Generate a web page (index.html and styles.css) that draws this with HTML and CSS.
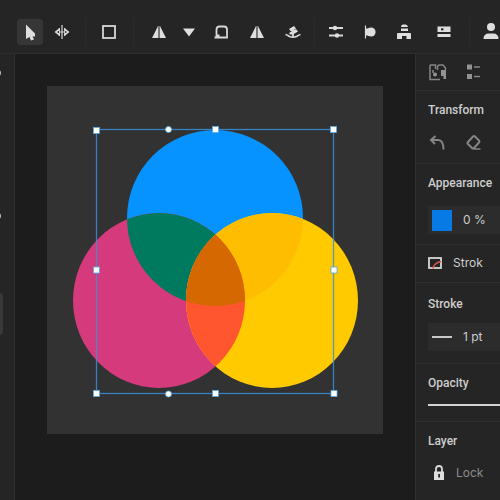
FILE: index.html
```html
<!DOCTYPE html>
<html lang="en">
<head>
    <meta charset="UTF-8">
    <title>Vector Editor</title>
    <link rel="stylesheet" href="styles.css">
</head>
<body>
    <header class="toolbar">
        <button type="button" class="tool active" aria-label="Select">
            <svg width="26" height="26" viewBox="0 0 26 26"><path class="fill" d="M9 5.500 L18 14.500 V17.500 H15.500 L17 20.500 L14 21.500 L12.500 18 L9 20 Z"/></svg>
        </button>
        <button type="button" class="tool" aria-label="Width">
            <svg width="16" height="16" viewBox="0 0 16 16"><path class="line" d="M8 1 V15 M5.500 4 Q4.500 8 5.500 12 M10.500 4 Q11.500 8 10.500 12 M4 8 H12"/><path class="fill" d="M.5 8 L5.500 4 V12 Z M15.500 8 L10.500 4 V12 Z"/><path class="hole" d="M3 8 L5 6.800 V9.200 Z M13 8 L11 6.800 V9.200 Z"/></svg>
        </button>
        <span class="sep"></span>
        <button type="button" class="tool" aria-label="Rectangle">
            <svg width="16" height="16" viewBox="0 0 16 16"><rect class="line bold" x="2" y="2" width="12" height="12"/></svg>
        </button>
        <span class="sep wide"></span>
        <button type="button" class="tool" aria-label="Flip horizontal">
            <svg width="16" height="16" viewBox="0 0 16 16"><path class="fill" d="M7 2 V14 H1 Z M9 2 L15 14 H9 Z"/><path class="dim" d="M7 2 H9 V14 H7 Z"/></svg>
        </button>
        <button type="button" class="tool small" aria-label="More transforms">
            <svg width="14" height="16" viewBox="0 0 14 16"><path class="fill" d="M1 4.500 H13 L7 12.500 Z"/></svg>
        </button>
        <button type="button" class="tool large" aria-label="Shape">
            <svg width="16" height="16" viewBox="0 0 16 16"><path class="line bold" d="M3.500 12.500 V5.500 Q3.500 2.500 6.500 2.500 H11 Q14 2.500 14 5.500 V13.500 H1.500 M3.500 11.500 H6.500"/></svg>
        </button>
        <button type="button" class="tool large" aria-label="Reflect">
            <svg width="16" height="16" viewBox="0 0 16 16"><path class="fill" d="M7 2 V14 H1 Z M9 2 L15 14 H9 Z"/><path class="dim" d="M7 2 H9 V14 H7 Z"/></svg>
        </button>
        <button type="button" class="tool large" aria-label="Puppet warp">
            <svg width="18" height="16" viewBox="0 0 18 16"><path class="fill" d="M5 5 L10 2 L12 4.500 L7 7.500 Z M5 9 L12 5 L14 7.500 L9 10.500 L6 10.500 Z"/><path class="line bold" d="M9 5 V13 M1.500 10.500 Q3.500 11 5 12.200 Q9 14.200 13 12.200 Q14.500 11 16.500 10.500"/></svg>
        </button>
        <span class="sep tight"></span>
        <button type="button" class="tool large" aria-label="Adjustments">
            <svg width="16" height="16" viewBox="0 0 16 16"><path class="line bold" d="M1 4 H15 M1 11.500 H15"/><circle class="fill" cx="7" cy="4" r="2.200"/><circle class="fill" cx="9" cy="11.500" r="2.200"/></svg>
        </button>
        <button type="button" class="tool" aria-label="Align">
            <svg width="14" height="16" viewBox="0 0 14 16"><path class="line" d="M2.500 1.500 V14.500"/><circle class="fill" cx="8" cy="8" r="4.600"/><path class="fill" d="M2.500 4.500 H7 V11.500 H2.500 Z"/></svg>
        </button>
        <button type="button" class="tool large" aria-label="Arrange">
            <svg width="16" height="18" viewBox="0 0 16 18"><path class="fill" d="M5 4 Q5 1.500 7 1.500 H9.500 Q11.500 1.500 12 4 Z M5 5.500 H12 V8 H5 Z M1 11 Q1 10 2 10 H14 Q15 10 15 11 V16 H10.500 V13 H6 V16 H1 Z"/></svg>
        </button>
        <button type="button" class="tool xlarge" aria-label="Properties">
            <svg width="14" height="16" viewBox="0 0 14 16"><path class="fill" d="M.5 2.500 H13.500 V8 H.5 Z M.5 10 H13.500 V13 H.5 Z"/><path class="hole" d="M4 4.300 H6.500 V6.300 H4 Z"/></svg>
        </button>
        <span class="sep tight"></span>
        <button type="button" class="tool large" aria-label="Account">
            <svg width="18" height="20" viewBox="0 0 18 20"><circle class="fill" cx="9" cy="5" r="4"/><path class="fill" d="M1.500 17 Q1.500 11.500 7 11.500 H11 Q16.500 11.500 16.500 17 Z"/></svg>
        </button>
    </header>

    <main class="workspace">
        <nav class="rail">
            <button type="button" class="rail-dot" aria-label="Pen"></button>
            <button type="button" class="rail-dot" aria-label="Curve"></button>
            <button type="button" class="rail-tab" aria-label="Layers"></button>
        </nav>

        <section class="canvas">
            <svg class="artboard" viewBox="47 86 336 348">
                <defs>
                    <clipPath id="in-blue"><circle cx="215" cy="218" r="88"/></clipPath>
                    <clipPath id="in-pink"><ellipse cx="159" cy="300.500" rx="86" ry="87.500"/></clipPath>
                </defs>
                <circle cx="215" cy="218" r="88" fill="#0793ff"/>
                <ellipse cx="159" cy="300.500" rx="86" ry="87.500" fill="#d43a7c"/>
                <ellipse cx="159" cy="300.500" rx="86" ry="87.500" fill="#007a5e" clip-path="url(#in-blue)"/>
                <ellipse cx="272" cy="300.500" rx="86" ry="87.500" fill="#ffca00"/>
                <ellipse cx="272" cy="300.500" rx="86" ry="87.500" fill="#ffbd00" clip-path="url(#in-blue)"/>
                <g clip-path="url(#in-pink)">
                    <ellipse cx="272" cy="300.500" rx="86" ry="87.500" fill="#ff562f"/>
                    <ellipse cx="272" cy="300.500" rx="86" ry="87.500" fill="#d56800" clip-path="url(#in-blue)"/>
                </g>
                <!-- selection box -->
                <rect class="selection" x="96.500" y="129.500" width="237" height="264"/>
                <g class="handles">
                    <rect x="93.500" y="127.500" width="6" height="6"/>
                    <rect x="212.500" y="126.500" width="6" height="6"/>
                    <rect x="330.500" y="126.500" width="6" height="6"/>
                    <rect x="93.500" y="267" width="6" height="6"/>
                    <rect x="331" y="267" width="6" height="6"/>
                    <rect x="93.500" y="390.500" width="6" height="6"/>
                    <rect x="212.500" y="390.500" width="6" height="6"/>
                    <rect x="331" y="390.500" width="6" height="6"/>
                    <circle cx="168.500" cy="129.500" r="3"/>
                    <circle cx="168.500" cy="394" r="3"/>
                </g>
            </svg>
        </section>

        <aside class="panel">
            <div class="tabs">
                <button type="button" class="icon-button" aria-label="Library">
                    <svg width="20" height="20" viewBox="0 0 20 20"><path class="soft" d="M2 3 V17.500 H12 M2 3 H7.500 V7 M9.500 8 V5 Q9.500 3 12 3 H15 L17.500 6 V8 M5 11 V8"/><circle class="softfill" cx="7" cy="12.500" r="2"/><path class="softfill" d="M13 8 H18 V17 H15.500 V14 H13 Z"/></svg>
                </button>
                <button type="button" class="icon-button" aria-label="List view">
                    <svg width="18" height="20" viewBox="0 0 18 20"><path class="softfill" d="M3 2.500 H8 V7.500 H3 Z M3 12 H8 V17 H3 Z"/><path class="soft" d="M10 5 H16 M10 14.500 H16"/></svg>
                </button>
            </div>

            <section class="group transform">
                <h2>Transform</h2>
                <div class="actions">
                    <button type="button" class="icon-button" aria-label="Undo">
                        <svg width="20" height="20" viewBox="0 0 20 20"><path class="soft thick" d="M7.500 3 L3 7 L7 11 M3 7 H10 Q15.500 7 15.500 16.500"/></svg>
                    </button>
                    <button type="button" class="icon-button" aria-label="Erase">
                        <svg width="18" height="20" viewBox="0 0 18 20"><path class="soft thick" d="M9 3.500 Q10 2.500 11 3.500 L15 7.500 Q16 8.500 15 9.500 L10 15 Q9 16 8 15 L4 11 Q3 10 4 9 Z"/><path class="soft" d="M10 16 H16.500"/></svg>
                    </button>
                </div>
            </section>

            <section class="group appearance">
                <h2>Appearance</h2>
                <div class="field">
                    <button type="button" class="swatch" aria-label="Fill color"></button>
                    <input type="text" value="0 %" aria-label="Fill amount">
                </div>
            </section>

            <section class="row">
                <button type="button" class="row-button">
                    <svg width="16" height="16" viewBox="0 0 16 16"><rect class="line bold" x="2" y="3" width="12" height="10"/><path class="strike" d="M6 13.500 Q7 8 14 6.500"/></svg>
                    <span>Strok</span>
                </button>
            </section>

            <section class="group stroke">
                <h2>Stroke</h2>
                <div class="field">
                    <span class="weight"></span>
                    <input type="text" value="1 pt" aria-label="Stroke weight">
                </div>
            </section>

            <section class="group opacity">
                <h2><label for="opacity">Opacity</label></h2>
                <input type="range" id="opacity" class="slider" min="0" max="100" value="100">
            </section>

            <section class="group layer">
                <h2>Layer</h2>
                <button type="button" class="row-button lock">
                    <svg width="14" height="18" viewBox="0 0 14 18"><path class="line bold" d="M4 8 V5 Q4 2 7 2 Q10 2 10 5 V8"/><path class="fill" d="M2 7.500 H12 V16 H2 Z"/><path class="hole" d="M6.200 10 H8 V13.500 H6.200 Z"/></svg>
                    <span>Lock</span>
                </button>
            </section>
        </aside>
    </main>
</body>
</html>
```
FILE: styles.css
```css
* {
    box-sizing: border-box;
}
body {
    margin: 0;
    height: 100vh;
    overflow: hidden;
    display: flex;
    flex-direction: column;
    background: #1c1c1c;
    color: #cdcdcd;
    font-family: Inter, "Liberation Sans", sans-serif;
    font-size: 12px;
    line-height: 16px;
}
button {
    background: none;
    border: none;
    padding: 0;
    color: inherit;
    font: inherit;
    cursor: pointer;
}
svg {
    display: block;
    flex: none;
}

/* Toolbar */
.toolbar {
    display: flex;
    align-items: center;
    gap: 6px;
    flex: none;
    height: 54px;
    padding: 11px 0 0 17px;
    background: #252525;
    border-bottom: 1px solid #2e2e2e;
    overflow: hidden;
}
.tool {
    display: flex;
    align-items: center;
    justify-content: center;
    flex: none;
    width: 26px;
    height: 26px;
    border-radius: 3px;
}
.tool.active {
    background: #363636;
}
.tool.small {
    width: 22px;
}
.tool.large {
    width: 30px;
}
.tool.xlarge {
    width: 38px;
}
.sep {
    flex: none;
    width: 1px;
    height: 28px;
    margin: 0 4px;
    background: #2b2b2b;
}
.sep.wide {
    margin: 0 6px 0 5px;
}
.sep.tight {
    margin: 0;
}

/* Icon strokes and fills */
.line {
    fill: none;
    stroke: #d8d8d8;
    stroke-width: 1.2;
}
.line.bold {
    stroke-width: 1.8;
}
.fill {
    fill: #dedede;
}
.dim {
    fill: #777;
}
.hole {
    fill: #2a2a2a;
}
.soft {
    fill: none;
    stroke: #858585;
    stroke-width: 1.5;
}
.soft.thick {
    stroke-width: 2;
}
.softfill {
    fill: #939393;
}
.strike {
    fill: none;
    stroke: #d9534f;
    stroke-width: 1.6;
}

/* Workspace */
.workspace {
    display: flex;
    flex: 1;
    min-height: 0;
}
.rail {
    display: flex;
    flex-direction: column;
    align-items: flex-end;
    flex: none;
    width: 15px;
    padding: 16px 13px 0 0;
    background: #252525;
    border-right: 1px solid #303030;
}
.rail-dot {
    flex: none;
    width: 6px;
    height: 6px;
    margin-bottom: 137px;
    border-radius: 50%;
    background: #bdbdbd;
}
.rail-dot + .rail-dot {
    margin-bottom: 74px;
}
.rail-tab {
    flex: none;
    width: 30px;
    height: 42px;
    margin-right: -2px;
    border-radius: 3px;
    background: #383838;
}
.canvas {
    flex: 1;
    min-width: 0;
    padding: 32px;
}
.artboard {
    width: 100%;
    background: #323232;
}
.selection {
    fill: none;
    stroke: #3c8fd8;
    stroke-width: 1.3;
    opacity: 0.85;
}
.handles {
    fill: #fff;
    stroke: #5aa9e6;
    stroke-width: 0.8;
}

/* Properties panel */
.panel {
    flex: none;
    width: 85px;
    background: #252525;
    border-left: 1px solid #303030;
    overflow: hidden;
}
.tabs {
    display: flex;
    align-items: center;
    gap: 16px;
    height: 37px;
    padding-left: 12px;
    border-bottom: 1px solid #303030;
}
.group {
    padding: 11px 0 8px 12px;
    border-bottom: 1px solid #303030;
}
h2 {
    margin: 0 0 12px;
    font-family: Roboto, "Liberation Sans", sans-serif;
    font-size: 12px;
    font-weight: 500;
    line-height: 16px;
}
.actions {
    display: flex;
    align-items: center;
    gap: 16px;
    height: 24px;
}
.icon-button {
    flex: none;
}
.transform h2 {
    margin-bottom: 13px;
}
.appearance h2 {
    margin-bottom: 15px;
}
.appearance {
    padding-bottom: 10px;
}
.field {
    display: flex;
    align-items: center;
    gap: 11px;
    height: 28px;
    padding-left: 4px;
    background: #2c2c2c;
}
.field input {
    flex: 1;
    min-width: 0;
    width: 0;
    padding: 0;
    border: none;
    outline: none;
    background: none;
    color: inherit;
    font: inherit;
}
.swatch {
    flex: none;
    width: 20px;
    height: 21px;
    background: #087ae6;
}
.weight {
    flex: none;
    width: 20px;
    height: 2px;
    background: #c8c8c8;
}
.row {
    padding: 6px 0 7px 11px;
    border-bottom: 1px solid #303030;
}
.row-button {
    display: flex;
    align-items: center;
    gap: 10px;
    height: 24px;
}
.stroke {
    padding: 13px 0 12px 12px;
}
.stroke h2 {
    margin-bottom: 11px;
}
.opacity h2 {
    margin-bottom: 6px;
}
.slider {
    display: block;
    appearance: none;
    width: 100%;
    height: 16px;
    margin: 0;
    background: none;
}
.slider::-webkit-slider-runnable-track {
    height: 2px;
    background: #d2d2d2;
}
.slider::-webkit-slider-thumb {
    appearance: none;
    width: 2px;
    height: 2px;
    background: #d2d2d2;
}
.layer {
    border-bottom: none;
}
.lock {
    padding-left: 4px;
    color: #8c8c8c;
}
```
